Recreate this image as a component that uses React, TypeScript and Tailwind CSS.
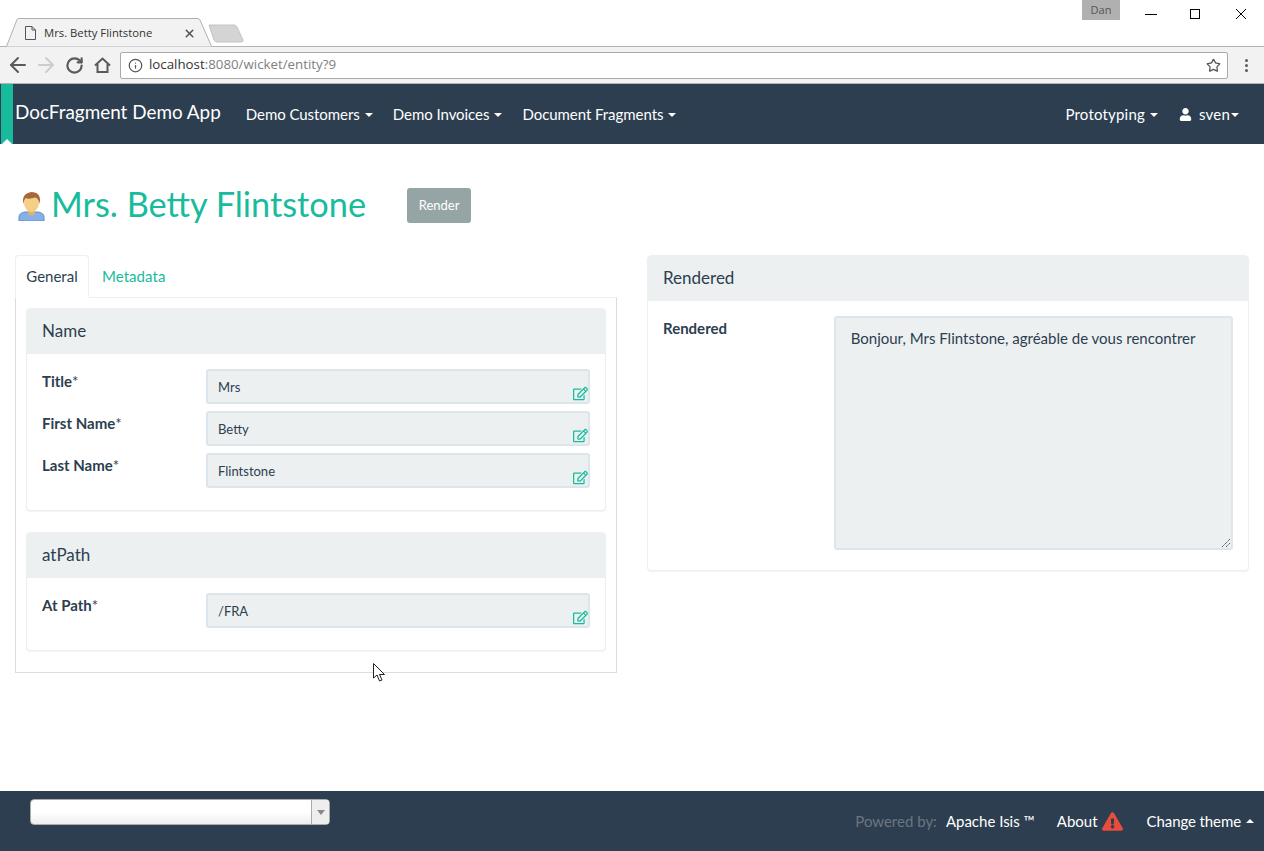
import { ArrowLeft, ArrowRight, RotateCw, Info, Star, X } from 'lucide-react'
import { FaUser, FaExclamationTriangle, FaRegEdit } from 'react-icons/fa'

function Caret({ up = false, className = 'ml-[5px]' }: { up?: boolean; className?: string }) {
  return (
    <span
      className={`inline-block w-0 h-0 border-x-4 border-x-transparent ${className} ${
        up ? 'border-b-4 border-b-white' : 'border-t-4 border-t-white'
      }`}
    />
  )
}

function NavItem({ label }: { label: string }) {
  return (
    <span className="flex items-center text-white text-[15px] tracking-[-0.05px]">
      {label}
      <Caret />
    </span>
  )
}

function Field({ label, value }: { label: string; value: string }) {
  return (
    <div className="flex items-start">
      <label className="w-[164px] pt-[1px] text-[15px] font-bold text-[#2c3e50]">
        {label}
        <span className="font-normal">*</span>
      </label>
      <div className="relative w-[384px] h-[35px] rounded-[3px] border-2 border-[#dce4ec] bg-[#ecf0f1] pl-[10px] pt-[2px] flex items-center text-[13px] text-[#2c3e50]">
        {value}
        <FaRegEdit className="absolute right-0 bottom-[1px] w-[15px] h-[15px] text-[#18bc9c]" />
      </div>
    </div>
  )
}

function Panel({ title, children }: { title: string; children: React.ReactNode }) {
  return (
    <div className="rounded-[4px] border border-[#ecf0f1] bg-white shadow-[0_1px_1px_rgba(0,0,0,0.05)]">
      <div className="h-[45px] bg-[#ecf0f1] rounded-t-[3px] pl-[15px] pb-[2px] flex items-center text-[17px] text-[#2c3e50]">
        {title}
      </div>
      {children}
    </div>
  )
}

export default function App() {
  return (
    <div className="relative h-[851px] w-[1264px] overflow-hidden bg-white flex flex-col font-['Lato',sans-serif] text-[#2c3e50]">
      {/* browser tab strip */}
      <div className="h-[47px] border-b border-[#b4b4b4] flex items-end relative shrink-0">
        <div className="relative w-[206px] h-[29px] ml-[6px] -mb-px pt-[1px] flex items-center font-['Open_Sans',sans-serif] text-[11.3px] text-[#333]">
          <svg className="absolute inset-0" width="206" height="29" viewBox="0 0 206 29">
            <path d="M0.5 28.5 L11 1.500 Q11.500 0.500 13 0.500 L192 0.500 Q193 0.500 194 2 L205.5 28.500" fill="#f2f2f2" stroke="#b0b0b0" />
          </svg>
          <svg className="relative ml-[19px]" width="11" height="14" viewBox="0 0 11 14">
            <path d="M0.500 0.500 H7 L10.500 4 V13.500 H0.500 Z M7 0.500 V4 H10.500" fill="none" stroke="#555" />
          </svg>
          <span className="relative ml-[8px] w-[139px]">Mrs. Betty Flintstone</span>
          <X className="relative w-[13px] h-[13px] text-[#555]" strokeWidth={2.8} />
        </div>
        <svg className="mb-[3px] -ml-[4px]" width="36" height="19" viewBox="0 0 36 19">
          <path d="M1 1 L26 1 Q28 1 29 3 L35 16 Q35.5 18 33 18 L9 18 Q7 18 6 16 Z" fill="#d4d4d4" stroke="#c4c4c4" />
        </svg>
        <div className="absolute right-[144px] top-0 w-[38px] h-[20px] bg-[#b0b0b0] text-center font-['Open_Sans',sans-serif] text-[11px] leading-[20px] text-[#555]">
          Dan
        </div>
        <svg className="absolute left-[1145px] top-[9px]" width="102" height="11" viewBox="0 0 102 11">
          <path d="M0 5.500 H12" stroke="#000" strokeWidth="1" />
          <rect x="45.500" y="0.500" width="9" height="9" fill="none" stroke="#000" />
          <path d="M91 0 L101 10 M101 0 L91 10" stroke="#000" strokeWidth="1" />
        </svg>
      </div>
      {/* browser toolbar */}
      <div className="h-[37px] bg-[#f2f2f2] border-b border-[#b4b4b4] flex items-center shrink-0">
        <ArrowLeft className="ml-[6px] w-6 h-6 text-[#5a5a5a]" strokeWidth={2} />
        <ArrowRight className="ml-[4px] w-6 h-6 text-[#cdcdcd]" strokeWidth={2} />
        <RotateCw className="ml-[7px] w-[19px] h-[19px] text-[#5a5a5a]" strokeWidth={2.8} />
        <svg className="ml-[10px]" width="17" height="16" viewBox="0 0 17 16">
          <path d="M1 8.500 L8.500 1.500 L16 8.500 M3.500 7 V15 H13.500 V7" fill="none" stroke="#5a5a5a" strokeWidth="2" />
        </svg>
        <div className="ml-[9px] w-[1108px] h-[27px] rounded-[2px] border border-[#a9a9a9] bg-white flex items-center font-['Open_Sans',sans-serif] text-[13.3px]">
          <Info className="ml-[7px] w-[15px] h-[15px] text-[#555]" strokeWidth={2} />
          <span className="ml-[6px] text-[#333]">localhost</span>
          <span className="text-[#808080]">:8080/wicket/entity?9</span>
          <Star className="ml-auto mr-[6px] w-[15px] h-[15px] text-[#555]" strokeWidth={2} />
        </div>
        <div className="ml-[17px] flex flex-col gap-[2px]">
          <span className="w-[3px] h-[3px] rounded-full bg-[#5a5a5a]" />
          <span className="w-[3px] h-[3px] rounded-full bg-[#5a5a5a]" />
          <span className="w-[3px] h-[3px] rounded-full bg-[#5a5a5a]" />
        </div>
      </div>
      {/* navbar */}
      <nav className="relative h-[60px] bg-[#2c3e50] flex items-center pl-[15px] pr-[25px] shrink-0">
        <div className="absolute left-[1px] top-0 w-[12px] h-full bg-[#18bc9c]">
          <div className="absolute bottom-0 left-[1px] w-0 h-0 border-x-[5px] border-x-transparent border-b-[5px] border-b-white" />
        </div>
        <span className="relative text-white text-[18.9px] -mt-[4px]">DocFragment Demo App</span>
        <div className="ml-[25px] flex items-center gap-[20px] mt-[1px]">
          <NavItem label="Demo Customers" />
          <NavItem label="Demo Invoices" />
          <NavItem label="Document Fragments" />
        </div>
        <div className="ml-auto flex items-center mt-[1px]">
          <span className="flex items-center text-white text-[15px] tracking-[0.2px]">
            Prototyping
            <Caret />
          </span>
          <FaUser className="ml-[21px] mr-[7px] w-[13px] h-[13px] text-white" />
          <span className="text-white text-[15px] tracking-[0.2px]">sven</span>
          <Caret className="ml-[1px]" />
        </div>
      </nav>
      {/* page */}
      <main className="flex-1 px-[15px]">
        <div className="flex items-center mt-[44px] h-[35px]">
          <svg className="ml-[3px] mt-[1px]" width="27" height="30" viewBox="0 0 27 30">
            <path d="M1 30 L1 26 Q1 22 7 21 L20 21 Q26 22 26 26 L26 30 Z" fill="#85b1e8" stroke="#5f8cc4" />
            <path d="M10 18 h7 v5 q-3.500 3 -7 0 Z" fill="#e0b26c" />
            <ellipse cx="13.500" cy="12" rx="7.500" ry="9" fill="#f5cf85" />
            <path d="M5.500 13 Q3 3 13 1 Q24 1 21.500 13 Q20.500 7 17 6.500 Q11 8.500 7.500 7 Q6 9 5.500 13 Z" fill="#a5683a" />
          </svg>
          <h1 className="ml-[6px] -mt-[3px] text-[34.3px] leading-none text-[#18bc9c]">Mrs. Betty Flintstone</h1>
          <button className="ml-[41px] w-[64px] h-[35px] rounded-[3px] bg-[#95a5a6] text-white text-[13px]">Render</button>
        </div>
        <div className="flex gap-[30px] mt-[32px]">
          {/* left column */}
          <div className="w-[602px]">
            <div className="flex h-[43px]">
              <div className="w-[74px] h-[43px] border border-[#ecf0f1] border-b-white rounded-t-[4px] bg-white relative z-10 flex items-center justify-center text-[15px]">
                General
              </div>
              <div className="ml-[13px] flex items-center text-[15px] tracking-[0.05px] text-[#18bc9c]">Metadata</div>
            </div>
            <div className="-mt-px border border-[#d8dfe3] border-t-[#ecf0f1] h-[376px] px-[10px] pt-[10px]">
              <Panel title="Name">
                <div className="px-[15px] pt-[15px] pb-[22px] flex flex-col gap-[7px]">
                  <Field label="Title" value="Mrs" />
                  <Field label="First Name" value="Betty" />
                  <Field label="Last Name" value="Flintstone" />
                </div>
              </Panel>
              <div className="h-[21px]" />
              <Panel title="atPath">
                <div className="px-[15px] pt-[15px] pb-[22px]">
                  <Field label="At Path" value="/FRA" />
                </div>
              </Panel>
            </div>
          </div>
          {/* right column */}
          <div className="w-[602px]">
            <Panel title="Rendered">
              <div className="flex px-[15px] pt-[15px] pb-[20px]">
                <label className="w-[171px] pt-[1px] text-[15px] font-bold">Rendered</label>
                <div className="relative w-[400px] h-[234px] rounded-[3px] border-2 border-[#dce4ec] bg-[#ecf0f1] px-[15px] pt-[9px] text-[15px]">
                  Bonjour, Mrs Flintstone, agréable de vous rencontrer
                  <svg className="absolute right-0 bottom-0" width="10" height="10" viewBox="0 0 10 10">
                    <path d="M1 9 L9 1 M5 9 L9 5" stroke="#555" strokeWidth="1" strokeDasharray="1.500 0.500" />
                  </svg>
                </div>
              </div>
            </Panel>
          </div>
        </div>
      </main>
      {/* footer */}
      <footer className="h-[60px] bg-[#2c3e50] flex items-start pl-[30px] pr-[10px] shrink-0">
        <div className="mt-[8px] w-[300px] h-[26px] rounded-[4px] border border-[#aaa] bg-gradient-to-b from-white from-50% to-[#eeeeee] flex justify-end">
          <div className="w-[18px] border-l border-[#aaa] bg-[#eeeeee] rounded-r-[3px] flex items-center justify-center">
            <span className="w-0 h-0 border-x-[4px] border-x-transparent border-t-[5px] border-t-[#888]" />
          </div>
        </div>
        <div className="ml-auto mt-[19px] flex items-center text-[15px] text-white h-[22px]">
          <span className="text-[#6b7681]">Powered by:</span>
          <span className="ml-[9px]">Apache Isis ™</span>
          <span className="ml-[22px]">About</span>
          <FaExclamationTriangle className="ml-[4px] w-[21px] h-[19px] text-[#e74c3c]" />
          <span className="ml-[24px] tracking-[-0.1px]">Change theme</span>
          <Caret up />
        </div>
      </footer>
      {/* mouse pointer */}
      <svg className="absolute left-[373px] top-[663px]" width="14" height="20" viewBox="0 0 14 20">
        <path d="M0.500 0.500 L0.500 15 L4 12 L6.500 18 L9 17 L6.500 11.500 L11.500 11.500 Z" fill="#fff" stroke="#222" strokeWidth="1" />
      </svg>
    </div>
  )
}
